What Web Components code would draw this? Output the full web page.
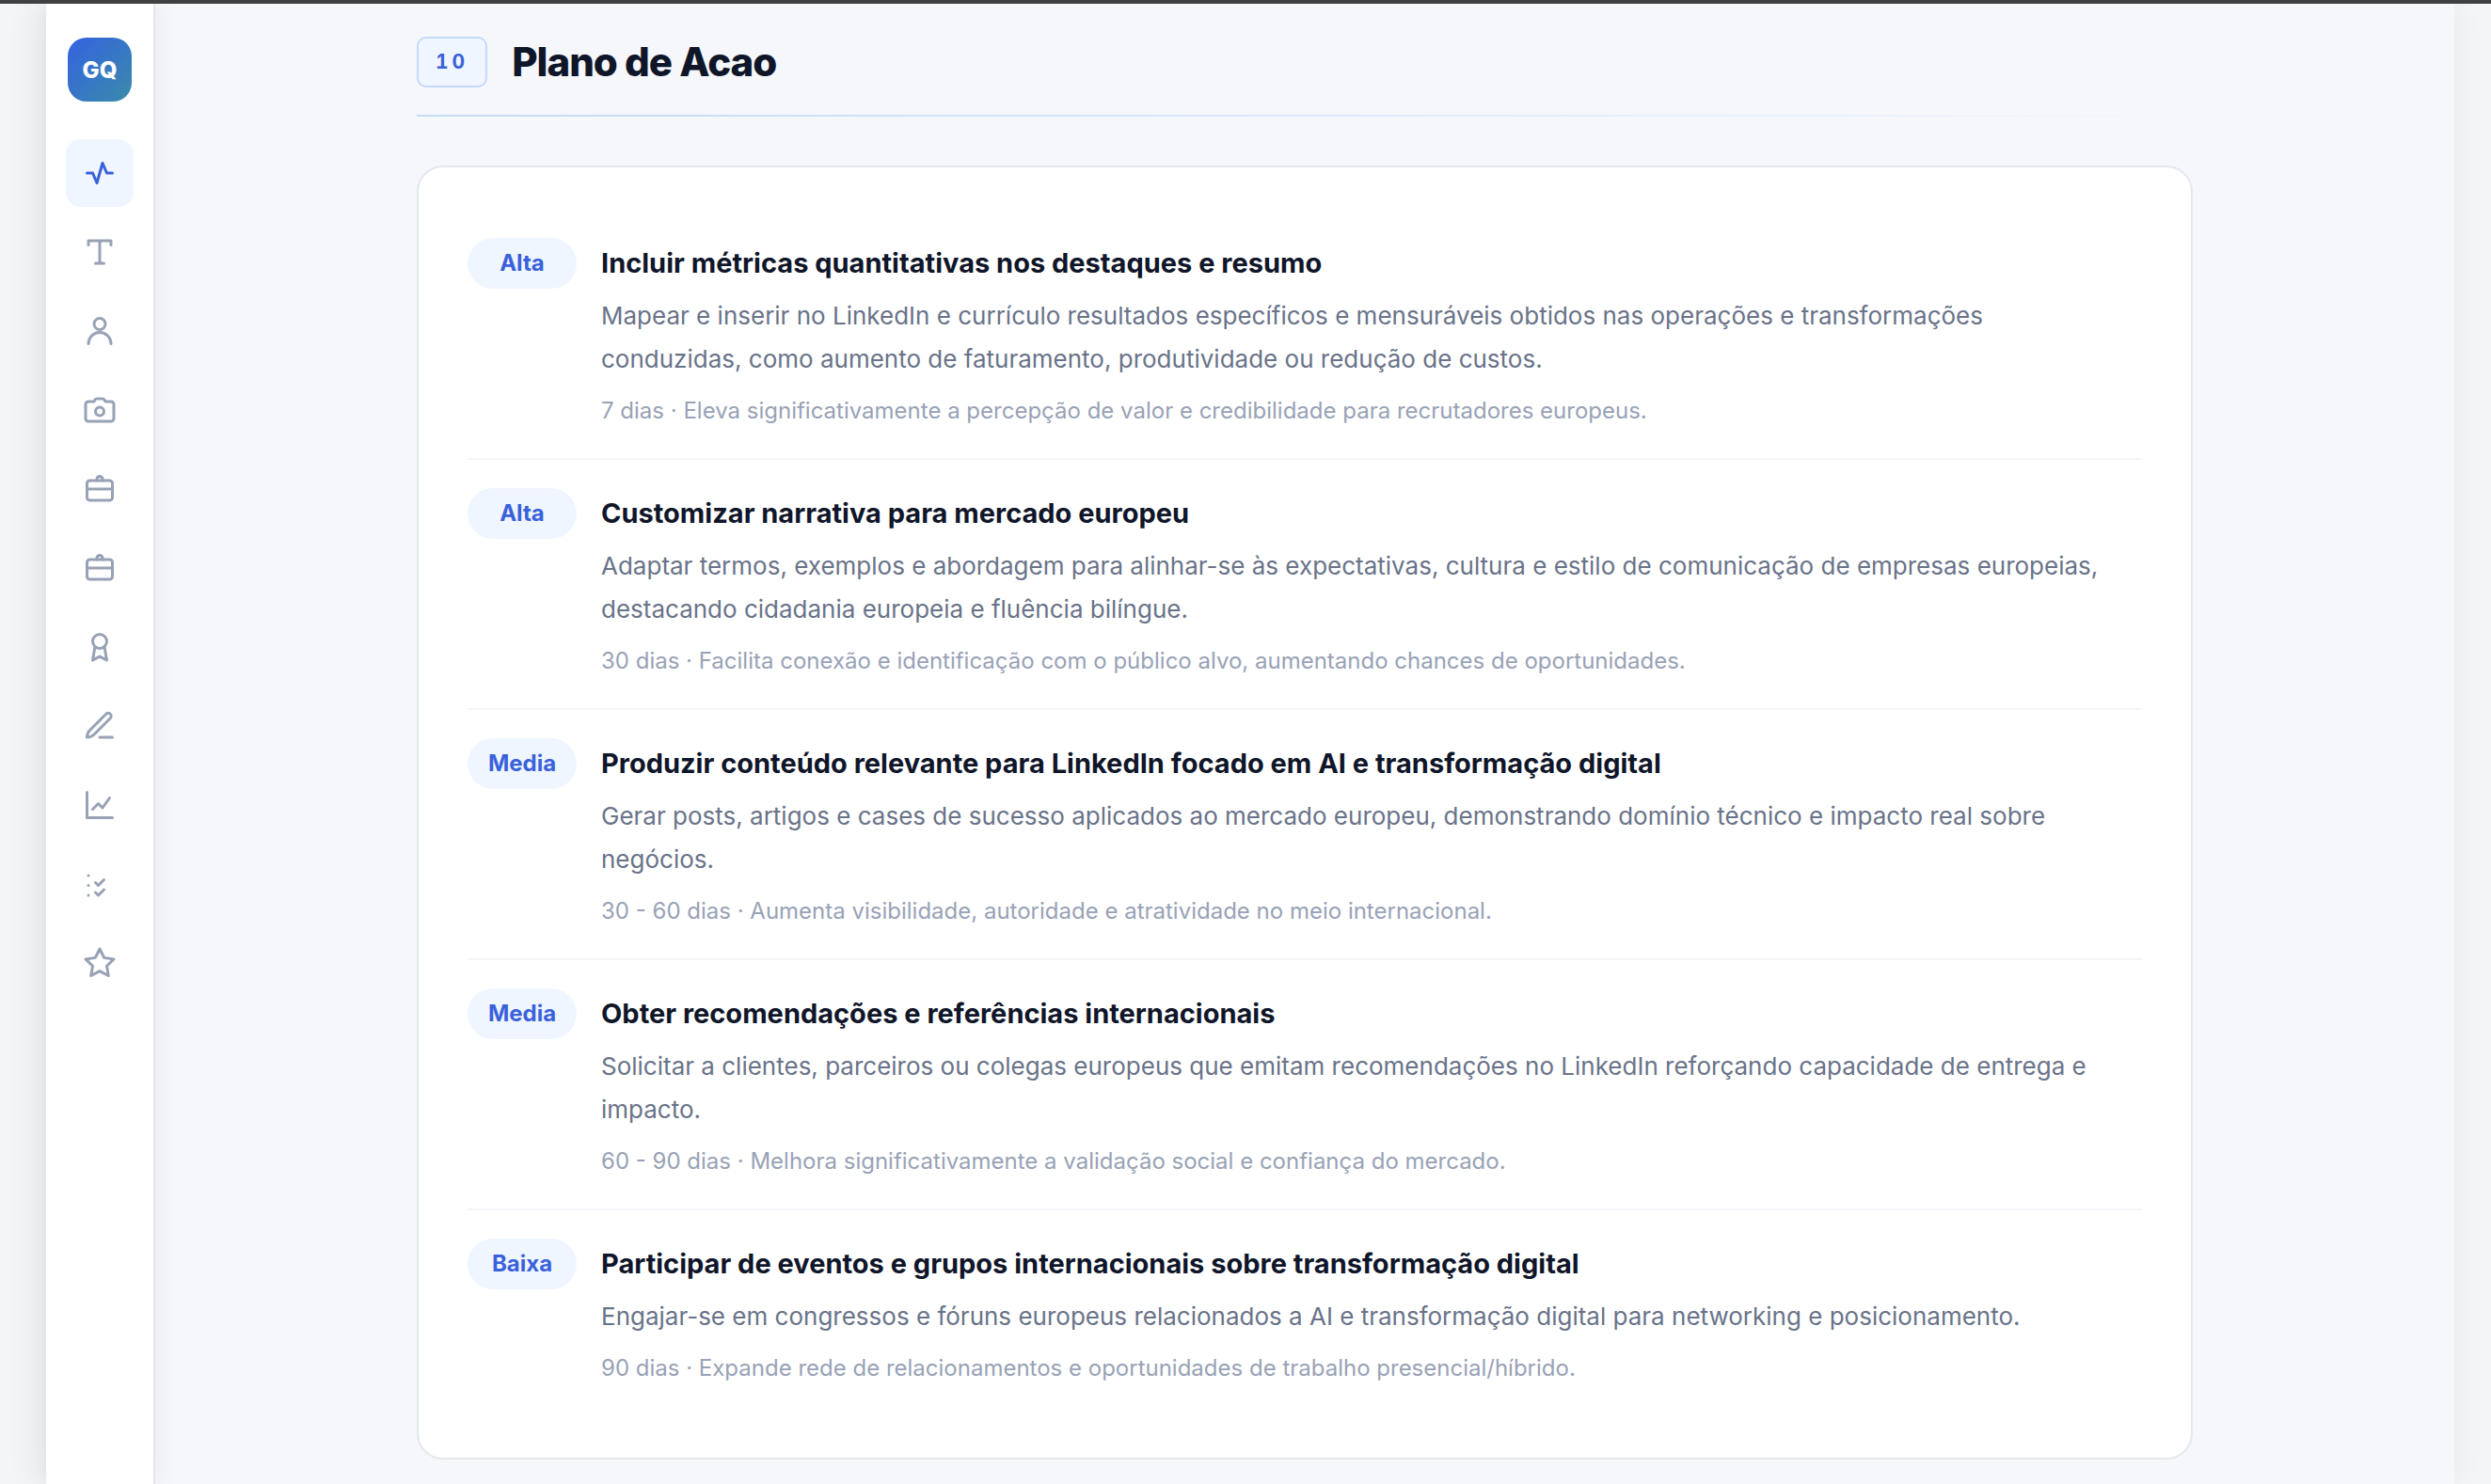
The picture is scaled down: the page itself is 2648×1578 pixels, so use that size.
<!DOCTYPE html>
<html lang="pt-BR">
<head>
<meta charset="utf-8">
<meta name="viewport" content="width=device-width, initial-scale=1">
<title>Plano de Acao</title>
<style>
    :root {
        --ink: #10162a;
        --body: #697389;
        --muted: #98a2b6;
        --blue: #3a61dc;
        --blue-soft: #f0f6ff;
        --blue-line: #c4daf9;
        --line: #e4e7ef;
        --page: #f5f7fb;
    }

    body {
        margin: 0;
        background: #f4f5f6;
        font-family: Inter, "Liberation Sans", sans-serif;
        color: var(--ink);
    }
</style>
</head>
<body>
<app-shell>
    <side-bar slot="nav">
        <nav-item icon="activity" label="Diagnóstico" active></nav-item>
        <nav-item icon="type" label="Título"></nav-item>
        <nav-item icon="user" label="Perfil"></nav-item>
        <nav-item icon="camera" label="Foto"></nav-item>
        <nav-item icon="briefcase" label="Experiência"></nav-item>
        <nav-item icon="briefcase" label="Cargos"></nav-item>
        <nav-item icon="award" label="Competências"></nav-item>
        <nav-item icon="pen" label="Conteúdo"></nav-item>
        <nav-item icon="chart" label="Métricas"></nav-item>
        <nav-item icon="checklist" label="Plano de ação"></nav-item>
        <nav-item icon="star" label="Conclusão"></nav-item>
    </side-bar>

    <section-header number="10">Plano de Acao</section-header>

    <action-list>
        <action-item priority="Alta">
            <span slot="title">Incluir métricas quantitativas nos destaques e resumo</span>
            Mapear e inserir no LinkedIn e currículo resultados específicos e mensuráveis obtidos nas operações e transformações conduzidas, como aumento de faturamento, produtividade ou redução de custos.
            <span slot="note">7 dias · Eleva significativamente a percepção de valor e credibilidade para recrutadores europeus.</span>
        </action-item>
        <action-item priority="Alta">
            <span slot="title">Customizar narrativa para mercado europeu</span>
            Adaptar termos, exemplos e abordagem para alinhar-se às expectativas, cultura e estilo de comunicação de empresas europeias, destacando cidadania europeia e fluência bilíngue.
            <span slot="note">30 dias · Facilita conexão e identificação com o público alvo, aumentando chances de oportunidades.</span>
        </action-item>
        <action-item priority="Media">
            <span slot="title">Produzir conteúdo relevante para LinkedIn focado em AI e transformação digital</span>
            Gerar posts, artigos e cases de sucesso aplicados ao mercado europeu, demonstrando domínio técnico e impacto real sobre negócios.
            <span slot="note">30 - 60 dias · Aumenta visibilidade, autoridade e atratividade no meio internacional.</span>
        </action-item>
        <action-item priority="Media">
            <span slot="title">Obter recomendações e referências internacionais</span>
            Solicitar a clientes, parceiros ou colegas europeus que emitam recomendações no LinkedIn reforçando capacidade de entrega e impacto.
            <span slot="note">60 - 90 dias · Melhora significativamente a validação social e confiança do mercado.</span>
        </action-item>
        <action-item priority="Baixa">
            <span slot="title">Participar de eventos e grupos internacionais sobre transformação digital</span>
            Engajar-se em congressos e fóruns europeus relacionados a AI e transformação digital para networking e posicionamento.
            <span slot="note">90 dias · Expande rede de relacionamentos e oportunidades de trabalho presencial/híbrido.</span>
        </action-item>
    </action-list>
</app-shell>

<script>
const ICONS = {
    activity: '<path d="M3 12h4l3 7 4-14 3 7h4"/>',
    type: '<path d="M4 7V4h16v3M12 4v16M9 20h6"/>',
    user: '<circle cx="12" cy="7" r="4"/><path d="M4 21a8 8 0 0 1 16 0"/>',
    camera: '<path d="M22 18a2 2 0 0 1-2 2H4a2 2 0 0 1-2-2V8a2 2 0 0 1 2-2h4l.7-1.3A1.5 1.5 0 0 1 10 4h4a1.5 1.5 0 0 1 1.3.7L16 6h4a2 2 0 0 1 2 2z"/><circle cx="12" cy="13" r="3"/>',
    briefcase: '<rect x="3" y="6" width="18" height="14" rx="2"/><path d="M10 6V5a2 2 0 0 1 4 0v1M3 12h18"/>',
    award: '<circle cx="12" cy="8" r="5"/><path d="M8.6 12 7 21.3l5-2.6 5 2.6L15.4 12"/>',
    pen: '<path d="M12 20h9"/><path d="M16.5 3.5a2.12 2.12 0 0 1 3 3L8 18c-1.2 1.2-3 2-5 2 0-2 .8-3.8 2-5z"/>',
    chart: '<path d="M3 3v18h18"/><path d="m7 15 4-4 3 3 5-7"/>',
    checklist: '<path d="M4 6h.01M4 13h.01M4 20h.01M9 11l2 2 4-4M9 18l2 2 4-4"/>',
    star: '<path d="m12 2 3.09 6.26 6.91 1.01-5 4.87 1.18 6.88L12 17.77l-6.18 3.25L7 14.14 2 9.27l6.91-1.01z"/>'
};

class AppShell extends HTMLElement {
    constructor() {
        super();
        const shadow = this.attachShadow({ mode: 'open' });
        const template = document.createElement('template');
        template.innerHTML = `
            <style>
                :host {
                    box-sizing: border-box;
                    min-height: 100vh;
                    border-top: 4px solid #404143;
                    padding: 0 39px 0 49px;
                    display: flex;
                    overflow: hidden;
                }

                .window {
                    flex: 1;
                    display: flex;
                    min-width: 0;
                    background: var(--page);
                    box-shadow: -6px 0 36px rgba(20, 24, 30, 0.08);
                }

                main {
                    flex: 1;
                    min-width: 0;
                    box-sizing: border-box;
                    padding: 35px 48px 24px;
                }

                .column {
                    max-width: 1888px;
                    margin: 0 auto;
                }
            </style>
            <div class="window">
                <slot name="nav"></slot>
                <main>
                    <div class="column"><slot></slot></div>
                </main>
            </div>
        `;
        shadow.appendChild(template.content.cloneNode(true));
    }
}

class SideBar extends HTMLElement {
    constructor() {
        super();
        const shadow = this.attachShadow({ mode: 'open' });
        const template = document.createElement('template');
        template.innerHTML = `
            <style>
                :host {
                    flex: none;
                    box-sizing: border-box;
                    width: 116px;
                    padding-top: 36px;
                    background: #fff;
                    border-right: 2px solid #e4e6ec;
                    box-shadow: 4px 0 24px rgba(20, 30, 60, 0.05);
                }

                .logo {
                    display: flex;
                    align-items: center;
                    justify-content: center;
                    width: 68px;
                    height: 68px;
                    margin: 0 auto 40px;
                    border-radius: 20px;
                    background: linear-gradient(135deg, #3462e0, #3a8bab);
                    color: #fff;
                    font-size: 24px;
                    font-weight: 800;
                }

                nav {
                    display: flex;
                    flex-direction: column;
                    align-items: center;
                    gap: 12px;
                }
            </style>
            <div class="logo">GQ</div>
            <nav><slot></slot></nav>
        `;
        shadow.appendChild(template.content.cloneNode(true));
    }
}

class NavItem extends HTMLElement {
    constructor() {
        super();
        const shadow = this.attachShadow({ mode: 'open' });
        const template = document.createElement('template');
        template.innerHTML = `
            <style>
                :host {
                    display: block;
                }

                button {
                    display: flex;
                    align-items: center;
                    justify-content: center;
                    width: 72px;
                    height: 72px;
                    padding: 0;
                    border: 0;
                    border-radius: 16px;
                    background: none;
                    color: var(--muted);
                    cursor: pointer;
                }

                :host([active]) button {
                    background: var(--blue-soft);
                    color: var(--blue);
                }

                svg {
                    width: 36px;
                    height: 36px;
                    fill: none;
                    stroke: currentColor;
                    stroke-width: 2;
                    stroke-linecap: round;
                    stroke-linejoin: round;
                }
            </style>
            <button type="button"><svg viewBox="0 0 24 24" aria-hidden="true"></svg></button>
        `;
        shadow.appendChild(template.content.cloneNode(true));
    }

    connectedCallback() {
        this.shadowRoot.querySelector('svg').innerHTML = ICONS[this.getAttribute('icon')];
        this.shadowRoot.querySelector('button').setAttribute('aria-label', this.getAttribute('label'));
    }
}

class SectionHeader extends HTMLElement {
    constructor() {
        super();
        const shadow = this.attachShadow({ mode: 'open' });
        const template = document.createElement('template');
        template.innerHTML = `
            <style>
                :host {
                    display: block;
                    margin-bottom: 52px;
                }

                header {
                    display: flex;
                    align-items: center;
                    gap: 26px;
                    padding-bottom: 29px;
                }

                .number {
                    box-sizing: border-box;
                    height: 54px;
                    padding: 0 18px;
                    border: 2px solid var(--blue-line);
                    border-radius: 10px;
                    background: var(--blue-soft);
                    color: var(--blue);
                    font-size: 21px;
                    font-weight: 700;
                    font-variant-numeric: tabular-nums;
                    line-height: 50px;
                    letter-spacing: 4px;
                }

                h2 {
                    margin: 0;
                    font-size: 42px;
                    font-weight: 800;
                    line-height: 54px;
                    letter-spacing: -1px;
                }

                .rule {
                    height: 2px;
                    background: linear-gradient(90deg, var(--blue-line), transparent);
                }
            </style>
            <header>
                <span class="number"></span>
                <h2><slot></slot></h2>
            </header>
            <div class="rule"></div>
        `;
        shadow.appendChild(template.content.cloneNode(true));
    }

    connectedCallback() {
        this.shadowRoot.querySelector('.number').textContent = this.getAttribute('number');
    }
}

class ActionList extends HTMLElement {
    constructor() {
        super();
        const shadow = this.attachShadow({ mode: 'open' });
        const template = document.createElement('template');
        template.innerHTML = `
            <style>
                :host {
                    display: block;
                    padding: 45px 52px;
                    border: 2px solid var(--line);
                    border-radius: 28px;
                    background: #fff;
                }
            </style>
            <slot></slot>
        `;
        shadow.appendChild(template.content.cloneNode(true));
    }
}

class ActionItem extends HTMLElement {
    constructor() {
        super();
        const shadow = this.attachShadow({ mode: 'open' });
        const template = document.createElement('template');
        template.innerHTML = `
            <style>
                :host {
                    display: flex;
                    align-items: flex-start;
                    gap: 26px;
                    padding: 28px 0;
                    border-bottom: 2px solid #f3f5f8;
                }

                :host(:last-child) {
                    border-bottom: 0;
                }

                .priority {
                    flex: none;
                    width: 116px;
                    margin-top: 2px;
                    border-radius: 27px;
                    background: var(--blue-soft);
                    color: var(--blue);
                    font-size: 24px;
                    font-weight: 700;
                    line-height: 54px;
                    text-align: center;
                }

                .text {
                    flex: 1;
                    min-width: 0;
                    padding-right: 16px;
                }

                h3 {
                    margin: 0 0 4px;
                    font-size: 29px;
                    font-weight: 700;
                    line-height: 58px;
                }

                p {
                    margin: 0;
                    color: var(--body);
                    font-size: 26px;
                    line-height: 46px;
                }

                .note {
                    margin-top: 10px;
                    color: var(--muted);
                    font-size: 24px;
                    line-height: 44px;
                }
            </style>
            <span class="priority"></span>
            <div class="text">
                <h3><slot name="title"></slot></h3>
                <p><slot></slot></p>
                <p class="note"><slot name="note"></slot></p>
            </div>
        `;
        shadow.appendChild(template.content.cloneNode(true));
    }

    connectedCallback() {
        this.shadowRoot.querySelector('.priority').textContent = this.getAttribute('priority');
    }
}

customElements.define('app-shell', AppShell);
customElements.define('side-bar', SideBar);
customElements.define('nav-item', NavItem);
customElements.define('section-header', SectionHeader);
customElements.define('action-list', ActionList);
customElements.define('action-item', ActionItem);
</script>
</body>
</html>
